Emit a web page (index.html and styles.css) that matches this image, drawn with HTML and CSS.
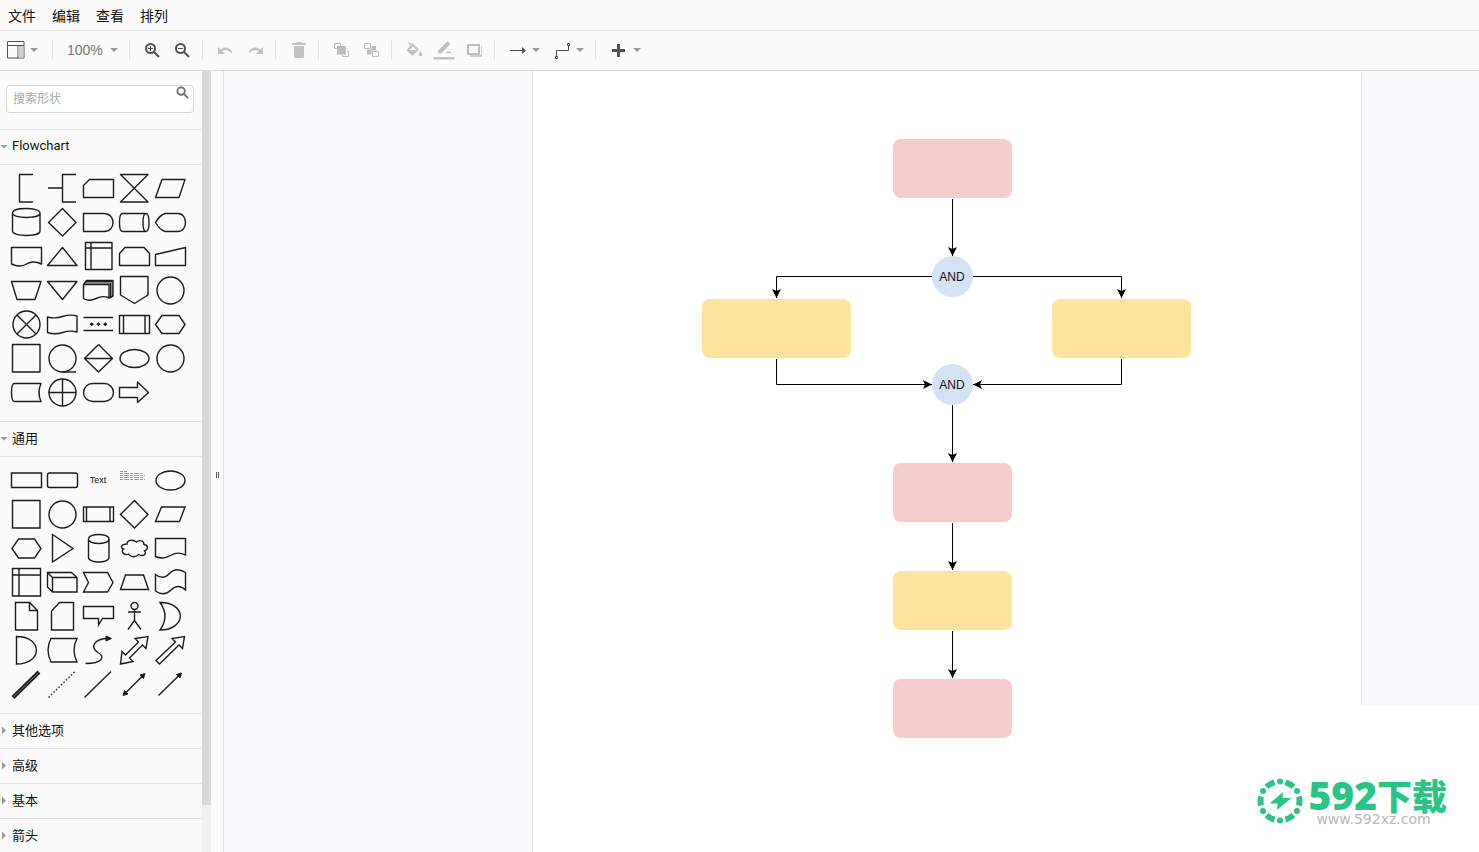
FILE: index.html
```html
<!DOCTYPE html>
<html lang="zh-CN">
<head>
<meta charset="utf-8">
<title>Flowchart</title>
<link rel="stylesheet" href="styles.css">
</head>
<body>
<nav class="menubar">
  <button>文件</button><button>编辑</button><button>查看</button><button>排列</button>
</nav>

<div class="toolbar">
  <div class="group group-first">
    <button class="drop" aria-label="视图"><svg class="icon dark" viewBox="0 0 18 18"><path d="M.5 .5h16.500v16.500H.5zM.5 4.500h16.500M11 4.500v12.500"/><path class="solid-light" d="M11.500 5h5v11.500h-5z"/></svg><svg class="caret" viewBox="0 0 8 4"><path d="M0 0h8L4 4z"/></svg></button>
  </div>
  <div class="group">
    <label class="drop"><select class="zoom" aria-label="缩放"><option>100%</option></select><svg class="caret" viewBox="0 0 8 4"><path d="M0 0h8L4 4z"/></svg></label>
  </div>
  <div class="group">
    <button class="tool" aria-label="放大"><svg class="icon dark bold" viewBox="0 0 18 18"><circle cx="7.500" cy="7.500" r="4.500"/><path d="M11 11l5 5"/><path class="thin" d="M5 7.500h5M7.500 5v5"/></svg></button>
    <button class="tool" aria-label="缩小"><svg class="icon dark bold" viewBox="0 0 18 18"><circle cx="7.500" cy="7.500" r="4.500"/><path d="M11 11l5 5"/><path class="thin" d="M5 7.500h5"/></svg></button>
  </div>
  <div class="group">
    <button class="tool" aria-label="撤销"><svg class="icon fill" viewBox="0 0 18 18"><path d="M2 6v7h7L6.500 10.300C9 8.300 12.500 8.500 14.800 12l1.700-.7C14 6 8.500 5.200 4.800 8.600z"/></svg></button>
    <button class="tool" aria-label="重做"><svg class="icon fill" viewBox="0 0 18 18"><path d="M17 6v7h-7l2.500-2.700C10 8.300 6.500 8.500 4.200 12l-1.700-.7C5 6 10.500 5.200 14.200 8.600z"/></svg></button>
  </div>
  <div class="group">
    <button class="tool" aria-label="删除"><svg class="icon fill" viewBox="0 0 18 18"><path d="M3 2h4l1-1h4l1 1h4v2H3zM5 5h10v10.500q0 1.500-1.500 1.500h-7Q5 17 5 15.500z"/></svg></button>
  </div>
  <div class="group">
    <button class="tool" aria-label="移至前面"><svg class="icon pale" viewBox="0 0 18 18"><path d="M5 7.500H2.500v-5h6V5M15 10h1.500v5.500h-6V14"/><path class="solid" d="M5 5h9v8.500H5z"/></svg></button>
    <button class="tool" aria-label="移至后面"><svg class="icon pale" viewBox="0 0 18 18"><path d="M2.500 2.500h6v5h-6zM10.500 10.500h6v5h-6z"/><path class="solid" d="M9.500 5H14v4.500h-4.500zM5 8.500h4.500v5H5z"/></svg></button>
  </div>
  <div class="group">
    <button class="tool" aria-label="填充颜色"><svg class="icon fill" viewBox="0 0 18 18"><path fill-rule="evenodd" d="M4 1l-1 1 2.500 2.500L2 8.500q-.7.700 0 1.400l4.700 4.300q.8.600 1.600 0l5-4.800q.7-.7 0-1.400L7.500 2 6 3zM4.500 9L8 5.500 11.500 9zM15.500 10q-2 2.500-1.800 3.500a1.800 1.800 0 0 0 3.600 0q0-1-1.800-3.500z"/></svg></button>
    <button class="tool" aria-label="线条颜色"><svg class="icon-wide fill" viewBox="0 0 22 20"><path d="M5 13.500v-2.700L13.500 2.300q1.200-1 2.700.3 1.200 1.300.2 2.600L8 13.500zM.5 17h21v2.500H.5zM12 13l2-1.500h4V13z"/></svg></button>
    <button class="tool" aria-label="阴影"><svg class="icon pale bold" viewBox="0 0 18 18"><path class="solid-light" d="M6 5h11v11H5v-2h11V5z"/><path d="M3 4h11v9H3z"/></svg></button>
  </div>
  <div class="group">
    <button class="drop" aria-label="连接"><svg class="icon dark" viewBox="0 0 18 18"><path d="M1 9.500h15"/><path class="solid" d="M13 6l4 3.500-4 3.500z"/></svg><svg class="caret" viewBox="0 0 8 4"><path d="M0 0h8L4 4z"/></svg></button>
    <button class="drop" aria-label="航点"><svg class="icon dark" viewBox="0 0 18 18"><path d="M3.500 15v-5.500h12V4M2.500 15.500h2v2h-2zM14.500 2.500h2v2h-2z"/></svg><svg class="caret" viewBox="0 0 8 4"><path d="M0 0h8L4 4z"/></svg></button>
  </div>
  <div class="group group-last">
    <button class="drop" aria-label="插入"><svg class="icon dark" viewBox="0 0 18 18"><path class="solid" d="M7 3h3v5h5v3h-5v5H7v-5H2V8h5z"/></svg><svg class="caret" viewBox="0 0 8 4"><path d="M0 0h8L4 4z"/></svg></button>
  </div>
</div>

<div class="workspace">
  <aside class="sidebar">
    <div class="search">
      <div class="search-box">
        <input type="text" placeholder="搜索形状" aria-label="搜索形状">
        <svg class="search-icon" viewBox="0 0 14 14"><circle cx="5.500" cy="5.500" r="4"/><path d="M8.500 8.500L13 13"/></svg>
      </div>
    </div>

    <button class="section open">Flowchart</button>
    <div class="palette rounded">
      <svg viewBox="-18 -17 36 34"><path d="M7-13.500H-6.500v27.500H7"/></svg>
      <svg viewBox="-18 -17 36 34"><path d="M14-13.500H.5v27.500H14M.5 0H-14"/></svg>
      <svg viewBox="-18 -17 36 34"><path d="M-8.500-8.500h24v18h-30v-12z"/></svg>
      <svg viewBox="-18 -17 36 34"><path d="M-13.500-13.500h27.500L-13.500 14H14z"/></svg>
      <svg viewBox="-18 -17 36 34"><path d="M-8-8.500h23l-6 18h-23.500z"/></svg>

      <svg viewBox="-18 -17 36 34"><path d="M-13.500-9v18c0 6 27.500 6 27.500 0V-9c0-6-27.500-6-27.500 0c0 6 27.500 6 27.500 0"/></svg>
      <svg viewBox="-18 -17 36 34"><path d="M.5-13.500L14 .5.500 14-13.500.5z"/></svg>
      <svg viewBox="-18 -17 36 34"><path d="M-14.500-8.500H6c12 0 12 18 0 18h-20.500z"/></svg>
      <svg viewBox="-18 -17 36 34"><path d="M-11.500-8.500H12c4 0 4 18 0 18h-23.500c-4 0-4-18 0-18zM12-8.500c-4 0-4 18 0 18"/></svg>
      <svg viewBox="-18 -17 36 34"><path d="M-5-8.500H8c10 0 10 18 0 18H-5Q-10 8-14.500.5-10-7-5-8.500z"/></svg>

      <svg viewBox="-18 -17 36 34"><path d="M-14.500-8.500h30V8Q7 4 .5 8t-15 0z"/></svg>
      <svg viewBox="-18 -17 36 34"><path d="M.5-8.500L15 9.500h-29.500z"/></svg>
      <svg viewBox="-18 -17 36 34"><path d="M-12.500-13.500H14v27h-26.500zM-12.500-8H14M-7-13.500v27"/></svg>
      <svg viewBox="-18 -17 36 34"><path d="M-9-8.500H10l5.500 6v12h-30v-12z"/></svg>
      <svg viewBox="-18 -17 36 34"><path d="M-14.500-1.500l30-7v18h-30z"/></svg>

      <svg viewBox="-18 -17 36 34"><path d="M-14.500-8.500h29.500L9 9.500H-9z"/></svg>
      <svg viewBox="-18 -17 36 34"><path d="M-14.500-8.500H15L.5 9.500z"/></svg>
      <svg viewBox="-18 -17 36 34"><path d="M-14.500-5.500H11V8Q5 5-2 8.500t-12.500 0zM-14.500-5.500l3-4H15V6l-4 2"/><path class="fine" d="M-13-7h25.500V7.500M-12-8.500h26V6.500"/></svg>
      <svg viewBox="-18 -17 36 34"><path d="M-13.500-13.500H14V5L.5 13.500-13.500 5z"/></svg>
      <svg viewBox="-18 -17 36 34"><circle cx=".5" cy=".5" r="13.500"/></svg>

      <svg viewBox="-18 -17 36 34"><circle cx=".5" cy=".5" r="13.500"/><path d="M-9-9L10 10M10-9L-9 10"/></svg>
      <svg viewBox="-18 -17 36 34"><path d="M-14.500-7Q-7-5 .5-7.500t14.500-.5V8Q8 6 .5 8.500t-15 0z"/></svg>
      <svg viewBox="-18 -17 36 34"><path d="M-14.500-6.500H15M-14.500 6.500H15"/><path class="dots" d="M-8.500.3l2.200-2 2.200 2-2.200 2zM-1.700.3l2.200-2 2.200 2-2.200 2zM5.100.3l2.200-2 2.200 2-2.200 2z"/></svg>
      <svg viewBox="-18 -17 36 34"><path d="M-14.500-8.500h30v18h-30zM-10.500-8.500v18M11-8.500v18"/></svg>
      <svg viewBox="-18 -17 36 34"><path d="M-8-8.500H9L15 .5 9 9.500H-8L-14.500.5z"/></svg>

      <svg viewBox="-18 -17 36 34"><path d="M-13.500-13.500H14V14h-27.500z"/></svg>
      <svg viewBox="-18 -17 36 34"><circle cx=".5" cy=".5" r="13.500"/><path d="M.5 14H14"/></svg>
      <svg viewBox="-18 -17 36 34"><path d="M.5-13.500L14.500.5.500 14-13.500.5h28"/><path d="M-13.500.5L.5-13.500"/></svg>
      <svg viewBox="-18 -17 36 34"><ellipse cx=".5" cy=".5" rx="14.500" ry="9"/></svg>
      <svg viewBox="-18 -17 36 34"><circle cx=".5" cy=".5" r="13.500"/></svg>

      <svg viewBox="-18 -17 36 34"><path d="M-11.500-8.500H15q-4 9 0 18h-26.500c-4 0-4-18 0-18z"/></svg>
      <svg viewBox="-18 -17 36 34"><circle cx=".5" cy=".5" r="13.500"/><path d="M-13.500.5H14M.5-13.500V14"/></svg>
      <svg viewBox="-18 -17 36 34"><rect x="-14.500" y="-8.500" width="30" height="18" rx="9"/></svg>
      <svg viewBox="-18 -17 36 34"><path d="M-14.500-4.500H3.500v-5.500L14.500.5l-11 10V5.500h-18z"/></svg>
    </div>

    <button class="section open">通用</button>
    <div class="palette">
      <svg viewBox="-18 -17 36 34"><path d="M-14.500-7h30V7.500h-30z"/></svg>
      <svg viewBox="-18 -17 36 34"><rect x="-14.500" y="-7" width="30" height="14.500" rx="2"/></svg>
      <span class="text-shape">Text</span>
      <svg viewBox="-18 -17 36 34"><path class="lines" d="M-14-8.500h7M-14-6.500H8M-14-4.500h25M-14-2.500h23M-14-.5h25"/></svg>
      <svg viewBox="-18 -17 36 34"><ellipse cx=".5" cy=".5" rx="14.500" ry="9.500"/></svg>

      <svg viewBox="-18 -17 36 34"><path d="M-13.500-13.500H14V14h-27.500z"/></svg>
      <svg viewBox="-18 -17 36 34"><circle cx=".5" cy=".5" r="13.500"/></svg>
      <svg viewBox="-18 -17 36 34"><path d="M-14.500-7h30V7.500h-30zM-11.500-7V7.500M12-7V7.500"/></svg>
      <svg viewBox="-18 -17 36 34"><path d="M.5-13.500L14 .5.500 14-13.500.5z"/></svg>
      <svg viewBox="-18 -17 36 34"><path d="M-8.500-7H15L9.500 7.500h-24z"/></svg>

      <svg viewBox="-18 -17 36 34"><path d="M-7.500-9h16L15 .5 8.500 10h-16l-6.500-9.500z"/></svg>
      <svg viewBox="-18 -17 36 34"><path d="M-9.500-13.500L11 .5-9.500 14z"/></svg>
      <svg viewBox="-18 -17 36 34"><path d="M-9.500-9V9.500c0 6 20.500 6 20.500 0V-9c0-6-20.500-6-20.500 0c0 6 20.500 6 20.500 0"/></svg>
      <svg viewBox="-18 -17 36 34"><path d="M-7-4c-6 0-7 4-3.500 5C-14 4-9 8-5.500 6-3 10 3 9 4.500 6.500 9 9 13.500 6 10.500 3 15 1 14-3 10-3.500 10-7.500 5-8.500 2.500-6-1-9-7-8-7-4z"/></svg>
      <svg viewBox="-18 -17 36 34"><path d="M-14.500-9.500h30V7Q8 3 .5 7.500t-15 1z"/></svg>

      <svg viewBox="-18 -17 36 34"><path d="M-13.500-13.500H14.500V14h-28zM-13.500-7h28M-7-13.500V14"/></svg>
      <svg viewBox="-18 -17 36 34"><path d="M-14.500-9.500H9.500l5.500 5V10h-24.500l-5-5zM-14.500-9.500l5 5H15M-9.500-4.500V10"/></svg>
      <svg viewBox="-18 -17 36 34"><path d="M-14.500-9.500h24L15 .5 9.500 10h-24l5-9.500z"/></svg>
      <svg viewBox="-18 -17 36 34"><path d="M-8.500-7h18l5 14.500h-28z"/></svg>
      <svg viewBox="-18 -17 36 34"><path d="M-14.500-7.500q7.500 6 14-1t16-1V8Q8 1 1 8t-15.500 1z"/></svg>

      <svg viewBox="-18 -17 36 34"><path d="M-10.500-13.500H3.500l8 8V14h-22zM3.500-13.500v8h8"/></svg>
      <svg viewBox="-18 -17 36 34"><path d="M-2.500-13.500h14V14h-22V-5z"/></svg>
      <svg viewBox="-18 -17 36 34"><path d="M-14.500-9.500h30V2.500h-11L.5 9V2.500h-15z"/></svg>
      <svg viewBox="-18 -17 36 34"><circle cx=".5" cy="-10" r="3.500"/><path d="M.5-6.500V4.500L-6 13.500M.5 4.500L7 13.500M-6-4H7"/></svg>
      <svg viewBox="-18 -17 36 34"><path d="M-10-13.500C17-14 17 14-10 14Q0 0-10-13.500z"/></svg>

      <svg viewBox="-18 -17 36 34"><path d="M-9.500-13.500C17-13.500 17 14-9.500 14z"/></svg>
      <svg viewBox="-18 -17 36 34"><path d="M-11-11.500h26q-6 11.500 0 23.500h-26q-6-12 0-23.500z"/></svg>
      <svg viewBox="-18 -17 36 34"><path d="M-12.500 13.500C4 13.500 8 7 0 2.500-9-3-3-11.500 10-11.500"/><path class="ink" d="M8-14l5.500 2.500L8-9z"/></svg>
      <svg viewBox="-18 -17 36 34"><path d="M14-13.500L12-1.500 8.500-5-4.500 8-1 11.500-13.500 14-12 1.500-8.500 5 4.500-8 1-11.500z"/></svg>
      <svg viewBox="-18 -17 36 34"><path d="M14.500-13.500L12.500-1.500 9-5-10.500 14l-3.500-3.500L5.500-8 2-11.500z"/></svg>

      <svg viewBox="-18 -17 36 34"><path class="thick" d="M-13 13.500L13-12"/><path class="core" d="M-12.500 13L12.500-11.500"/></svg>
      <svg viewBox="-18 -17 36 34"><path class="dotted" d="M-13.500 13.500L13-12.500"/></svg>
      <svg viewBox="-18 -17 36 34"><path d="M-13.500 13.500L13-12.500"/></svg>
      <svg viewBox="-18 -17 36 34"><path d="M-9 9.500L9-8.500"/><path class="ink" d="M11-10.500L9.500-5.500 6-9zM-11 11.500l1.500-5 3.500 3.500z"/></svg>
      <svg viewBox="-18 -17 36 34"><path d="M-11.500 11.500L9-8.500"/><path class="ink" d="M11.500-11L10-6 6.500-9.500z"/></svg>
    </div>

    <button class="section">其他选项</button>
    <button class="section">高级</button>
    <button class="section">基本</button>
    <button class="section">箭头</button>
  </aside>
  <div class="scrollbar"><div class="thumb"></div></div>
  <div class="splitter"><i></i><i></i></div>

  <main class="canvas">
    <div class="page">
      <svg class="diagram" viewBox="533 71 828 781">
        <defs>
          <marker id="arrow" viewBox="0 0 9 9" markerWidth="9" markerHeight="9" refX="9" refY="4.500" orient="auto" markerUnits="userSpaceOnUse"><path d="M0 0L9 4.500 0 9 2 4.500z"/></marker>
        </defs>
        <g class="pink">
          <rect x="893" y="139" width="119" height="59" rx="8"/>
          <rect x="893" y="463" width="119" height="59" rx="8"/>
          <rect x="893" y="679" width="119" height="59" rx="8"/>
        </g>
        <g class="yellow">
          <rect x="702" y="299" width="149" height="59" rx="8"/>
          <rect x="1052" y="299" width="139" height="59" rx="8"/>
          <rect x="893" y="571" width="119" height="59" rx="8"/>
        </g>
        <g class="blue">
          <circle cx="952.500" cy="276.500" r="20.500"/>
          <circle cx="952.500" cy="384.500" r="20.500"/>
        </g>
        <g class="edges">
          <path d="M952.500 199V256"/>
          <path d="M932 276.500H776.500V298"/>
          <path d="M973 276.500H1121.500V298"/>
          <path d="M776.500 359V384.500H932"/>
          <path d="M1121.500 359V384.500H973"/>
          <path d="M952.500 405V462"/>
          <path d="M952.500 523V570"/>
          <path d="M952.500 631V678"/>
        </g>
        <text x="952" y="281">AND</text>
        <text x="952" y="389">AND</text>
      </svg>
    </div>
    <div class="watermark">
      <svg class="badge" viewBox="0 0 46 46">
        <circle class="ring" cx="23" cy="23" r="19.500" pathLength="120"/>
        <g><circle cx="23" cy="3.500" r="3"/><circle cx="40" cy="13" r="3"/><circle cx="40" cy="33" r="3"/><circle cx="23" cy="42.500" r="3"/><circle cx="6" cy="33" r="3"/><circle cx="6" cy="13" r="3"/><path d="M26 14L12.500 25.500h8L20 32l14.500-12h-9z"/></g>
      </svg>
      <div class="brand">
        <div class="brand-name"><span class="digits">592</span><span>下载</span></div>
        <div class="brand-url">www.592xz.com</div>
      </div>
    </div>
  </main>
</div>
</body>
</html>
```
FILE: styles.css
```css
* { box-sizing: border-box; }

body {
  margin: 0;
  height: 100vh;
  display: flex;
  flex-direction: column;
  overflow: hidden;
  background: #fbfbfb;
  color: #111;
  font-family: "Liberation Sans", "Noto Sans CJK SC", sans-serif;
  font-size: 13px;
}

button, select, input { font: inherit; color: inherit; }
button, select { border: 0; background: none; padding: 0; margin: 0; }
svg { display: block; flex: none; }

.menubar {
  flex: none;
  display: flex;
  gap: 16px;
  height: 31px;
  padding: 0 8px;
  border-bottom: 1px solid #e0e0e0;
  font-size: 14px;
}

.toolbar {
  flex: none;
  display: flex;
  align-items: center;
  height: 40px;
  padding-bottom: 2px;
  border-bottom: 1px solid #dadada;
}
.group {
  display: flex;
  align-items: center;
  height: 20px;
  padding: 0 5px 0 7px;
  border-right: 1px solid #e4e4e4;
}
.group-first { padding: 0 8px 0 0; }
.group-last { border-right: 0; }
.tool {
  width: 30px;
  display: flex;
  justify-content: center;
}
.drop {
  display: flex;
  align-items: center;
  gap: 5px;
  padding: 0 6px 0 7px;
}
.zoom {
  appearance: none;
  width: 38px;
  color: #777;
  font-size: 14px;
}
.caret { width: 8px; height: 4px; fill: #999; }
.icon { width: 18px; height: 18px; fill: none; stroke-width: 1; }
.icon-wide { width: 22px; height: 20px; }
.dark { stroke: #505050; }
.pale { stroke: #bdbdbd; }
.bold { stroke-width: 2; }
.thin { stroke-width: 1; }
.fill { fill: #c2c2c2; }
.dark .solid { fill: #505050; stroke: none; }
.pale .solid { fill: #bdbdbd; stroke: none; }
.solid-light { fill: #cfcfcf; stroke: none; }

.workspace {
  flex: 1;
  min-height: 0;
  display: flex;
}

.sidebar {
  flex: none;
  width: 202px;
  overflow: hidden;
}
.search {
  padding: 14px 8px 16px 6px;
  border-bottom: 1px solid #e5e5e5;
}
.search-box { position: relative; }
.search-box input {
  display: block;
  width: 100%;
  height: 28px;
  padding: 0 24px 0 6px;
  border: 1px solid #d5d5d5;
  border-radius: 4px;
  background: #fff;
  font-size: 12px;
}
.search-box input::placeholder { color: #aaa; }
.search-icon {
  position: absolute;
  top: 1px;
  right: 5px;
  width: 13px;
  height: 13px;
  fill: none;
  stroke: #707070;
  stroke-width: 2;
}

.section {
  display: flex;
  align-items: center;
  width: 100%;
  height: 35px;
  padding-bottom: 3px;
  border-bottom: 1px solid #e5e5e5;
  font-family: Roboto, "Noto Sans CJK SC", sans-serif;
}
.section::before {
  content: "";
  width: 4px;
  height: 8px;
  margin: 2px 6px 0 2px;
  background: #999;
  clip-path: polygon(0 0, 100% 50%, 0 100%);
}
.section.open::before {
  width: 8px;
  height: 4px;
  margin: 2px 4px 0 0;
  clip-path: polygon(0 0, 100% 0, 50% 100%);
}

.palette {
  display: grid;
  grid-template-columns: repeat(5, 36px);
  grid-auto-rows: 34px;
  padding: 6px 8px 12px;
  border-bottom: 1px solid #e5e5e5;
}
.palette svg {
  width: 36px;
  height: 34px;
  fill: none;
  stroke: #1c1c1c;
  stroke-width: 1.4;
}
.rounded svg { stroke-linejoin: round; }
.palette .ink { fill: #1c1c1c; stroke-width: 1; }
.palette .dots { fill: #1c1c1c; stroke: none; }
.palette .fine { stroke-width: 1; }
.palette .lines { stroke: #999; stroke-width: 1; stroke-dasharray: 3 1 5 1; }
.palette .thick { stroke-width: 4; }
.palette .core { stroke: #777; stroke-width: 1; }
.palette .dotted { stroke-dasharray: 1.500 2; }
.text-shape {
  display: grid;
  place-items: center;
  font-size: 9px;
}

.scrollbar { flex: none; width: 9px; background: #f2f2f2; }
.thumb { height: 94%; background: #d9d9d9; }
.splitter {
  flex: none;
  width: 12px;
  display: flex;
  align-items: center;
  justify-content: center;
  gap: 1px;
  padding-bottom: 24px;
}
.splitter + .canvas { border-left: 1px solid #e2e4e8; }
.splitter i { width: 1px; height: 6px; margin-top: 50px; background: #555; }

.canvas {
  flex: 1;
  min-width: 0;
  position: relative;
  display: grid;
  grid-template-columns: 308fr 830px 117fr;
  background: #f8f9fb;
}
.page {
  grid-column: 2;
  overflow: hidden;
  background: #fff;
  border: solid #e6e8eb;
  border-width: 0 1px;
}
.diagram { width: 828px; height: 781px; }
.diagram text { font-size: 12px; text-anchor: middle; fill: #111; }
.pink { fill: #f6cdcc; }
.yellow { fill: #fde49d; }
.blue { fill: #d5e1f4; }
.edges path { fill: none; stroke: #000; stroke-width: 1; marker-end: url(#arrow); }

.watermark {
  position: absolute;
  right: 0;
  bottom: 0;
  display: flex;
  align-items: flex-start;
  gap: 5px;
  height: 146px;
  padding: 72px 32px 0 16px;
  background: #fff;
}
.badge { width: 46px; height: 46px; fill: #2bc487; }
.badge .ring {
  fill: none;
  stroke: #2bc487;
  stroke-width: 6;
  stroke-dasharray: 9 11;
  stroke-dashoffset: -5.500;
  transform: rotate(-90deg);
  transform-origin: 50% 50%;
}
.brand-name {
  display: flex;
  align-items: center;
  height: 34px;
  color: #2bc487;
  font-family: "Noto Sans CJK SC", sans-serif;
  font-size: 35px;
  font-weight: 900;
  line-height: 34px;
}
.brand-name .digits { font-family: "Noto Sans", sans-serif; font-size: 39px; }
.brand-url {
  padding-left: 8px;
  color: #b8b8b8;
  font-family: "DejaVu Sans", sans-serif;
  font-size: 14px;
  line-height: 14px;
}
```
